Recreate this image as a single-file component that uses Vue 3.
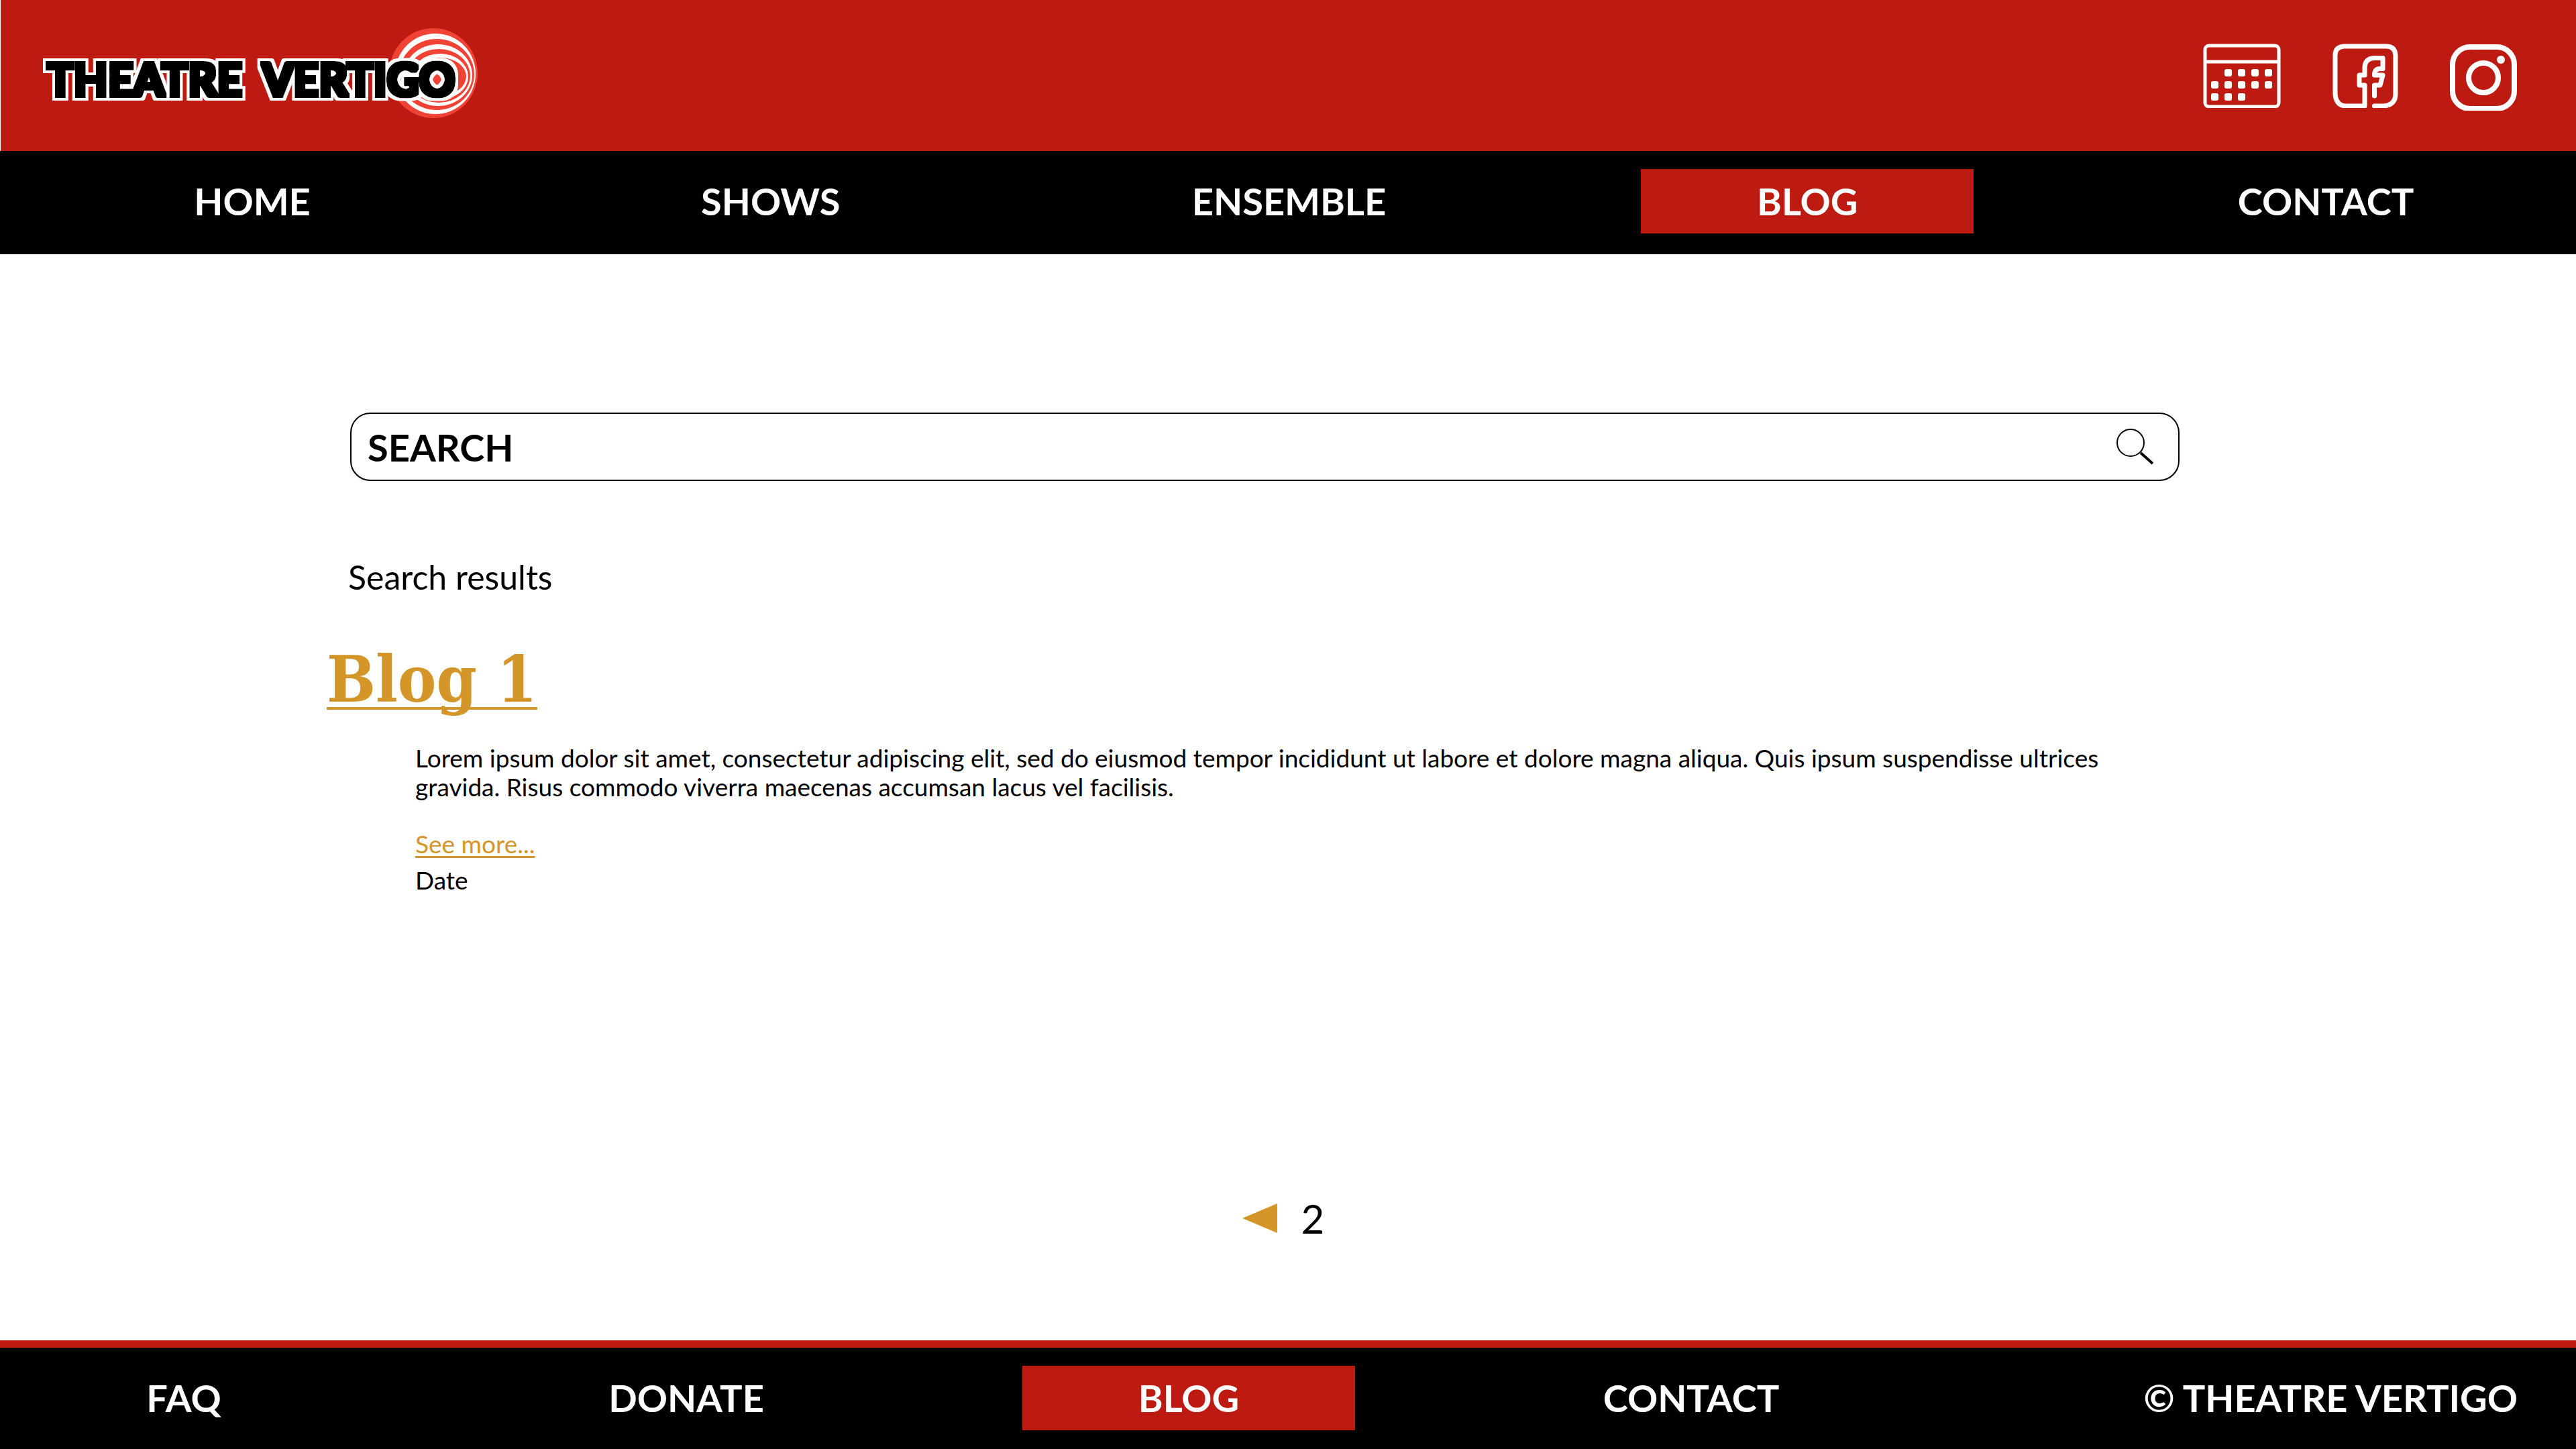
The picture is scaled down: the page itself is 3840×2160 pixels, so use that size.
<script setup>
import { ref } from 'vue'

const query = ref('')

const mainLinks = [
  { label: 'HOME' },
  { label: 'SHOWS' },
  { label: 'ENSEMBLE' },
  { label: 'BLOG', active: true },
  { label: 'CONTACT' },
]

const footerLinks = [
  { label: 'FAQ' },
  { label: 'DONATE' },
  { label: 'BLOG', active: true },
  { label: 'CONTACT' },
]

// Calendar days as [column, row]
const days = [
  [1, 0], [2, 0], [3, 0], [4, 0],
  [0, 1], [1, 1], [2, 1], [3, 1], [4, 1],
  [0, 2], [1, 2], [2, 2],
]
</script>

<template>
  <div class="page">
    <header class="banner">
      <a class="logo" href="#" aria-label="Theatre Vertigo">
        <svg width="660" height="136" viewBox="0 0 660 136">
          <defs>
            <!-- Thickens the black letters and puts a white rim round them -->
            <filter id="logo-rim" x="-5%" y="-20%" width="110%" height="140%">
              <feMorphology in="SourceAlpha" operator="dilate" radius="3" result="fat" />
              <feMorphology in="SourceAlpha" operator="dilate" radius="7" result="wide" />
              <feFlood flood-color="#fff" />
              <feComposite in2="wide" operator="in" result="rim" />
              <feMerge>
                <feMergeNode in="rim" />
                <feMergeNode in="fat" />
              </feMerge>
            </filter>
          </defs>
          <g>
            <ellipse cx="586" cy="68" rx="66" ry="67" fill="#f04235" />
            <ellipse cx="589" cy="69" rx="60" ry="60" fill="#fff" />
            <ellipse cx="591" cy="70" rx="56" ry="53" fill="#f04235" />
            <ellipse cx="593" cy="71" rx="51" ry="46" fill="#fff" />
            <ellipse cx="594" cy="72" rx="47" ry="40" fill="#f04235" />
            <ellipse cx="596" cy="73" rx="42" ry="34" fill="#fff" />
            <ellipse cx="597" cy="73" rx="38" ry="28" fill="#f04235" />
          </g>
          <g filter="url(#logo-rim)">
            <text class="logo-text" x="10" y="102">THEATRE</text>
            <text class="logo-text" x="331" y="102">VERTIGO</text>
          </g>
        </svg>
      </a>
      <div class="social">
        <a href="#" aria-label="Calendar">
          <svg width="116" height="98" viewBox="0 0 116 98" fill="none" stroke="#fff" stroke-width="5">
            <rect x="3" y="5" width="110" height="91" rx="6" />
            <path d="M3 29H113" />
            <rect
              v-for="[c, r] in days"
              :key="`${c}-${r}`"
              :x="12 + c * 20"
              :y="40 + r * 18"
              width="11"
              height="11"
              rx="3"
              fill="#fff"
              stroke="none"
            />
          </svg>
        </a>
        <a href="#" aria-label="Facebook">
          <svg width="98" height="98" viewBox="0 0 98 98" fill="none" stroke="#fff" stroke-width="7" stroke-linecap="round" stroke-linejoin="round">
            <path d="M62.500 95H77Q94 93 94 77V19Q93 6 80 6H17Q4 7 4 19V77Q5 93 18 95H48V64H40V49H48V37Q49 24 62 23.500H75V39.500H70Q62.500 40 62.500 49H75L71 64H62.500V80" />
          </svg>
        </a>
        <a href="#" aria-label="Instagram">
          <svg width="100" height="102" viewBox="0 0 100 102" fill="none" stroke="#fff" stroke-width="8">
            <rect x="4" y="7" width="92" height="92" rx="26" />
            <circle cx="50" cy="53" r="22" />
            <circle cx="76" cy="26" r="6" fill="#fff" stroke="none" />
          </svg>
        </a>
      </div>
    </header>

    <nav class="main-nav" aria-label="Main">
      <a
        v-for="link in mainLinks"
        :key="link.label"
        href="#"
        class="nav-link"
        :class="{ active: link.active }"
      >{{ link.label }}</a>
    </nav>

    <main class="content">
      <section class="results">
        <form class="search" role="search" @submit.prevent>
          <input v-model="query" type="text" placeholder="SEARCH" aria-label="Search" />
          <button type="submit" aria-label="Submit search">
            <svg width="58" height="58" viewBox="0 0 58 58" fill="none" stroke="#000">
              <circle cx="23" cy="23" r="20" stroke-width="2" />
              <path d="M38 38L56 54" stroke-width="4" />
            </svg>
          </button>
        </form>

        <p class="results-label">Search results</p>

        <article class="post">
          <h2><a href="#">Blog 1</a></h2>
          <div class="post-body">
            <p>
              Lorem ipsum dolor sit amet, consectetur adipiscing elit, sed do eiusmod tempor incididunt ut labore et dolore magna aliqua. Quis ipsum suspendisse ultrices gravida. Risus commodo viverra maecenas accumsan lacus vel facilisis.
            </p>
            <a class="more" href="#">See more...</a>
            <p class="date">Date</p>
          </div>
        </article>
      </section>

      <nav class="pagination" aria-label="Pages">
        <button type="button" aria-label="Previous page">
          <svg width="52" height="44" viewBox="0 0 52 44">
            <path d="M0 22L52 0V44Z" fill="#d49629" />
          </svg>
        </button>
        <span>2</span>
      </nav>
    </main>

    <footer class="footer">
      <a
        v-for="link in footerLinks"
        :key="link.label"
        href="#"
        class="nav-link"
        :class="{ active: link.active }"
      >{{ link.label }}</a>
      <span class="copyright">© THEATRE VERTIGO</span>
    </footer>
  </div>
</template>

<style>
body {
  margin: 0;
  background: #fff;
}
</style>

<style scoped>
.page {
  display: flex;
  flex-direction: column;
  min-height: 100vh;
  font-family: Lato, "Open Sans", sans-serif;
  color: #000;
}

p,
h2 {
  margin: 0;
}

svg {
  display: block;
}

button {
  padding: 0;
  border: 0;
  background: none;
  cursor: pointer;
}

.banner {
  display: flex;
  justify-content: space-between;
  align-items: flex-start;
  padding: 41px 88px 48px 59px;
  border-left: 1px solid #fff;
  background: #bd1a12;
}

.logo-text {
  font-size: 66px;
  font-weight: 900;
}

.social {
  display: flex;
  gap: 77px;
  padding-top: 22px;
}

.main-nav {
  display: flex;
  justify-content: space-between;
  padding: 27px 125px 31px 128px;
  background: #000;
}

.nav-link {
  width: 496px;
  line-height: 96px;
  font-size: 56px;
  font-weight: 700;
  text-align: center;
  text-decoration: none;
  color: #fff;
}

.nav-link.active {
  background: #bd1a12;
}

.content {
  flex: 1;
  display: flex;
  flex-direction: column;
}

.results {
  padding: 236px 591px 0 487px;
}

.search {
  display: flex;
  align-items: center;
  margin-left: 35px;
  padding: 0 36px 0 24px;
  border: 2px solid #000;
  border-radius: 30px;
}

.search input {
  flex: 1;
  min-width: 0;
  height: 98px;
  padding: 0;
  border: 0;
  outline: 0;
  background: none;
  font: 700 56px Lato, "Open Sans", sans-serif;
  color: #000;
}

.search input::placeholder {
  color: #000;
  opacity: 1;
}

.results-label {
  margin: 115px 0 70px 32px;
  font-size: 50px;
  line-height: 56px;
}

.post h2 {
  font-family: "DejaVu Serif Condensed", "DejaVu Serif", serif;
  font-size: 96px;
  font-weight: 700;
  line-height: 110px;
}

.post a {
  color: #d49629;
  text-decoration-skip-ink: none;
}

.post h2 a {
  text-decoration-thickness: 4px;
  text-underline-offset: 8px;
}

.post-body {
  margin: 40px 48px 0 132px;
  font-size: 37px;
  line-height: 43px;
}

.more {
  display: inline-block;
  margin: 42px 0 11px;
  text-decoration-thickness: 3px;
  text-underline-offset: 4px;
}

.pagination {
  display: flex;
  justify-content: center;
  align-items: center;
  gap: 36px;
  margin-top: auto;
  padding: 64px 14px 146px 0;
  font-size: 60px;
  line-height: 72px;
}

.footer {
  display: flex;
  gap: 253px;
  padding: 27px 87px 28px 26px;
  border-top: 11px solid #bd1a12;
  background: #000;
}

.copyright {
  margin-left: auto;
  line-height: 96px;
  font-size: 56px;
  font-weight: 700;
  white-space: nowrap;
  color: #fff;
}
</style>
